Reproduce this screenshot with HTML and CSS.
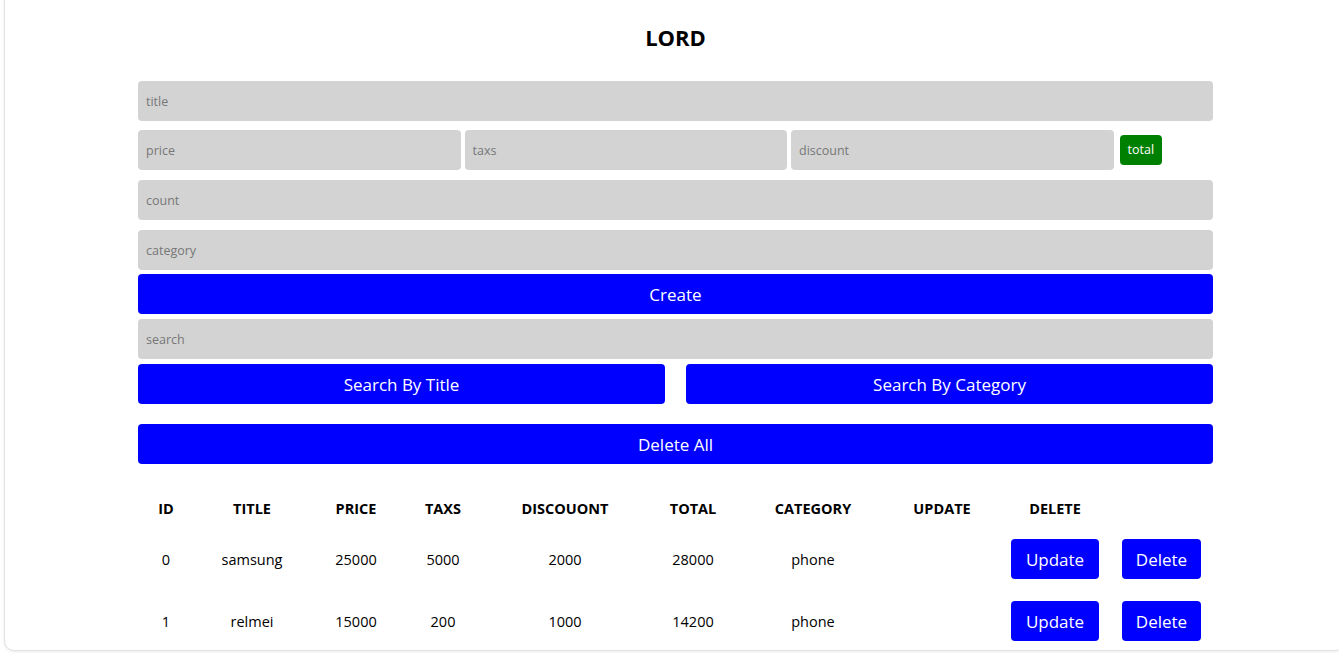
FILE: index.html
```html
<!DOCTYPE html>
<html>
<head>
<meta charset="utf-8">
<link rel="stylesheet" href="styles.css">
</head>
<body>
<div class="card">
  <div class="crud">
    <h2 class="title">LORD</h2>
    <div class="inputs">
      <input class="field" type="text" placeholder="title">
      <div class="price-row">
        <input class="field third" type="text" placeholder="price">
        <input class="field third" type="text" placeholder="taxs">
        <input class="field third" type="text" placeholder="discount">
        <small class="total">total</small>
      </div>
      <input class="field count" type="text" placeholder="count">
      <input class="field category" type="text" placeholder="category">
      <button class="btn create">Create</button>
    </div>
    <div class="search-block">
      <input class="field" type="text" placeholder="search">
      <div class="search-btns">
        <button class="btn">Search By Title</button>
        <button class="btn">Search By Category</button>
      </div>
    </div>
    <div class="delete-all">
      <button class="btn">Delete All</button>
    </div>
    <table class="outputs">
      <colgroup>
        <col style="width:56px"><col style="width:116px"><col style="width:92px"><col style="width:82px"><col style="width:162px"><col style="width:94px"><col style="width:146px"><col style="width:112px"><col style="width:114px"><col>
      </colgroup>
      <thead>
        <tr><th>ID</th><th>TITLE</th><th>PRICE</th><th>TAXS</th><th>DISCOUONT</th><th>TOTAL</th><th>CATEGORY</th><th>UPDATE</th><th>DELETE</th><th></th></tr>
      </thead>
      <tbody>
        <tr><td>0</td><td>samsung</td><td>25000</td><td>5000</td><td>2000</td><td>28000</td><td>phone</td><td></td><td><button class="tbtn">Update</button></td><td><button class="tbtn">Delete</button></td></tr>
        <tr><td>1</td><td>relmei</td><td>15000</td><td>200</td><td>1000</td><td>14200</td><td>phone</td><td></td><td><button class="tbtn">Update</button></td><td><button class="tbtn">Delete</button></td></tr>
      </tbody>
    </table>
  </div>
</div>
</body>
</html>
```

FILE: styles.css
```css
html, body {
  margin: 0;
  padding: 0;
  height: 653px;
  overflow: hidden;
  background: #ffffff;
  font-family: "Open Sans", "Noto Sans", sans-serif;
}
.card {
  margin: -12px 0 0 4px;
  width: 1341px;
  height: 663px;
  border: 1px solid #e2e2e2;
  border-radius: 10px;
  box-shadow: 0 1px 3px rgba(0,0,0,0.08);
  background: #fff;
  box-sizing: border-box;
}
.crud {
  width: 1075px;
  margin: 0 auto;
  padding-top: 33px;
  position: relative;
  left: 1px;
}
.title {
  margin: 0;
  text-align: center;
  font-size: 22px;
  font-weight: 700;
  line-height: 30px;
  color: #000;
}
.inputs {
  margin-top: 29px;
  display: flex;
  flex-direction: column;
}
.field {
  display: block;
  width: 100%;
  height: 40px;
  box-sizing: border-box;
  border: none;
  outline: none;
  border-radius: 4px;
  background: #d3d3d3;
  padding: 0 8px;
  font-family: inherit;
  font-size: 12.5px;
  color: #333;
}
.field::placeholder { color: #777; }
.price-row { margin-top: 9px; }
.count, .category { margin-top: 10px; }
.price-row {
  display: flex;
  align-items: center;
  gap: 4px;
}
.price-row .third { flex: 0 0 322.5px; }
.total {
  margin-left: 2px;
  background: #008000;
  color: #fff;
  border-radius: 4px;
  height: 30px;
  line-height: 30px;
  padding: 0 8px;
  font-size: 12.5px;
}
.btn {
  display: block;
  width: 100%;
  height: 40px;
  border: none;
  border-radius: 4px;
  background: #0000ff;
  color: #fff;
  font-family: inherit;
  font-size: 17px;
  cursor: pointer;
}
.create { margin-top: 4px; }
.search-block { margin-top: 5px; }
.search-btns {
  margin-top: 5px;
  display: flex;
  justify-content: space-between;
}
.search-btns .btn { width: 527px; }
.delete-all { margin-top: 20px; }
.outputs {
  margin-top: 24px;
  width: 100%;
  table-layout: fixed;
  border-collapse: collapse;
  text-align: center;
  font-size: 14.5px;
}
.outputs th {
  font-weight: 700;
  height: 40px;
  padding: 0;
  font-size: 14.5px;
}
.outputs td {
  height: 62px;
  padding: 0;
}
.tbtn {
  height: 40px;
  border: none;
  border-radius: 4px;
  background: #0000ff;
  color: #fff;
  font-family: inherit;
  font-size: 17px;
  padding: 0 15px;
}
.outputs td:last-child .tbtn { padding: 0 14px; margin-left: -2px; }
```
